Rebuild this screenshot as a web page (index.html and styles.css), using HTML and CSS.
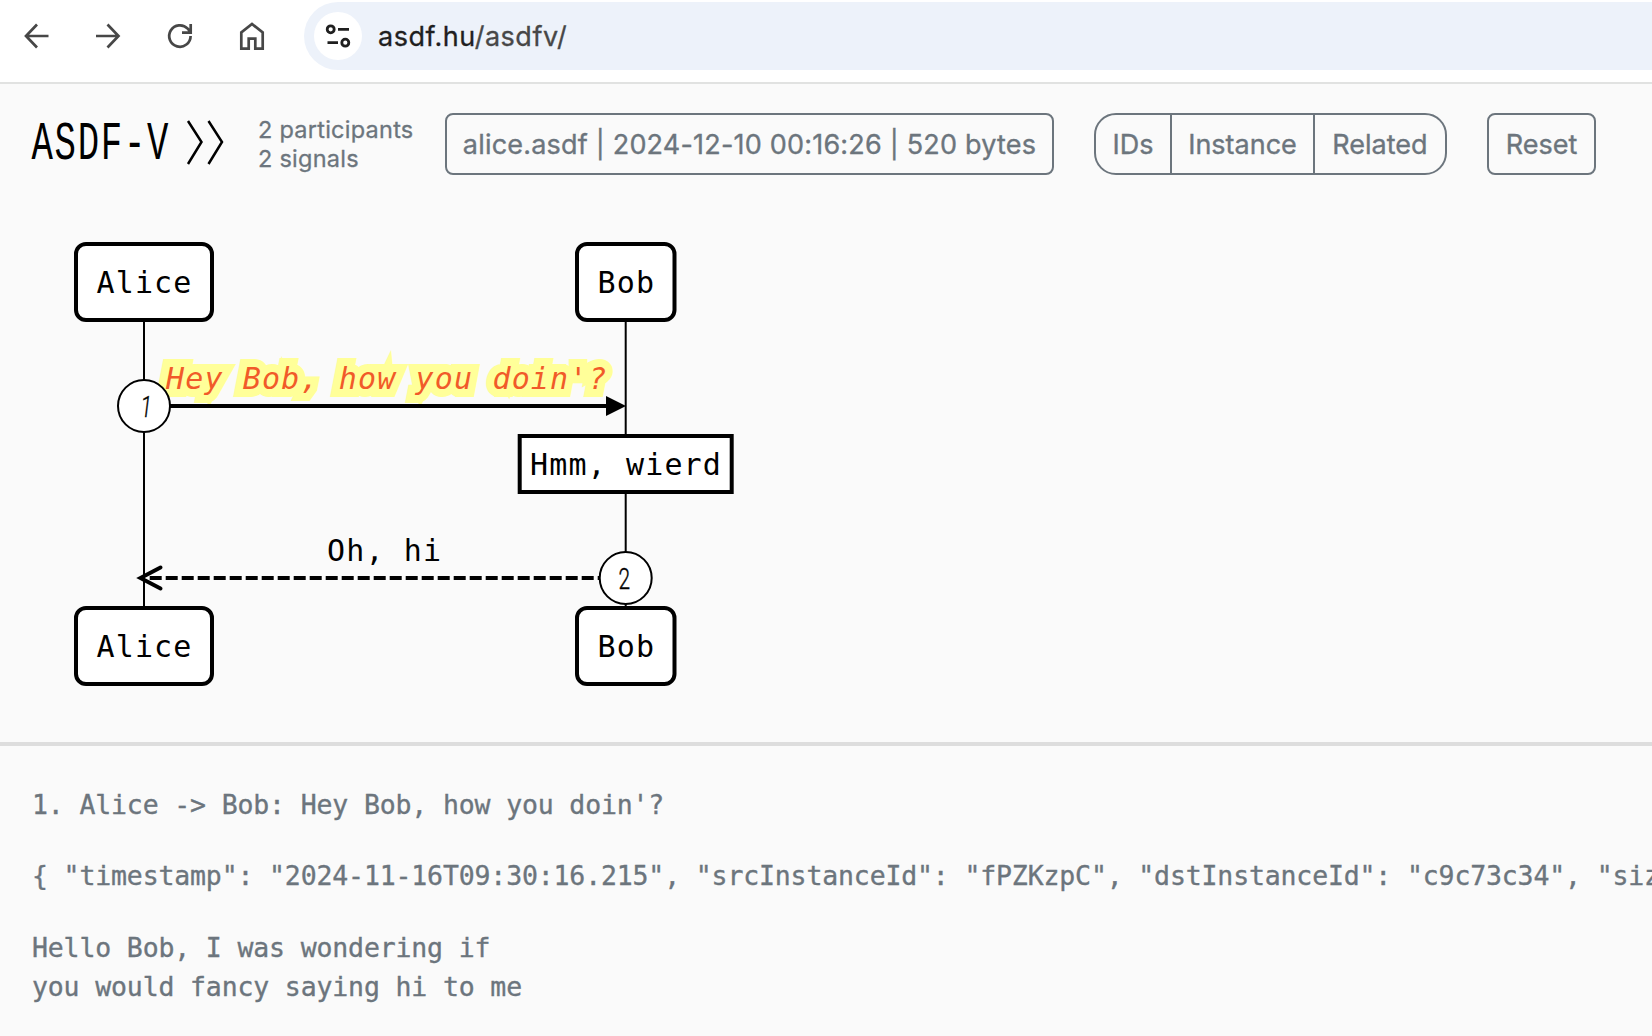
FILE: index.html
```html
<!DOCTYPE html>
<html lang="en">
<head>
<meta charset="utf-8">
<title>ASDF-V</title>
<link rel="stylesheet" href="styles.css">
</head>
<body>
<nav class="toolbar">
  <svg class="nav-icon" viewBox="0 0 32 32"><path d="M28.500 16H6.500M17 4.500 6 16l11 11.500"/></svg>
  <svg class="nav-icon" viewBox="0 0 32 32"><path d="M4 16h22M15.500 4.500 26.500 16l-11 11.500"/></svg>
  <svg class="nav-icon" viewBox="0 0 32 32"><path d="M26.600 16A10.700 10.700 0 1 1 23.700 8.700L26.400 12M26.700 4v8.700H18"/></svg>
  <svg class="nav-icon" viewBox="0 0 32 32"><path d="M5.300 28.600V12.500L16 4l10.700 8.500v16.100h-7.400V18.700h-6.600v9.900z"/></svg>
  <div class="omnibox">
    <span class="site-info">
      <svg width="28" height="28" viewBox="0 0 28 28"><circle cx="6.700" cy="7.300" r="3.500"/><circle cx="21.300" cy="20.700" r="3.500"/><path d="M14 7.300h11M3.500 20.700h10.500"/></svg>
    </span>
    <span class="url"><b>asdf.hu</b>/asdfv/</span>
  </div>
</nav>

<header class="header">
  <svg class="logo" width="206" height="52" viewBox="-10 0 206 52">
    <text transform="translate(1.500 41) scale(.66 1)">ASDF-V</text>
    <path d="M158 3l13.500 21-13.500 22M178.500 3l13.500 21-13.500 22"/>
  </svg>
  <div class="stats"><div>2 participants</div><div>2 signals</div></div>
  <button class="btn file"><span>alice.asdf | 2024-12-10 00:16:26 | 520 bytes</span></button>
  <div class="group">
    <button class="btn ids">IDs</button><button class="btn instance">Instance</button><button class="btn related">Related</button>
  </div>
  <button class="btn reset">Reset</button>
</header>

<main class="diagram">
<svg width="760" height="542" viewBox="0 200 760 542">
  <path class="life" d="M144 320V608M625.700 320V608"/>
  <g class="box">
    <rect x="76" y="244" width="136" height="76" rx="10"/>
    <rect x="577" y="244" width="97.500" height="76" rx="10"/>
    <rect x="76" y="608" width="136" height="76" rx="10"/>
    <rect x="577" y="608" width="97.500" height="76" rx="10"/>
    <rect x="519.700" y="436" width="212" height="56"/>
  </g>
  <g class="label">
    <text x="96.500" y="292.500">Alice</text>
    <text x="597.500" y="292.500">Bob</text>
    <text x="96.500" y="656.500">Alice</text>
    <text x="597.500" y="656.500">Bob</text>
    <text x="530" y="474.500">Hmm, wierd</text>
    <text x="327" y="561">Oh, hi</text>
    <text class="active" x="166" y="389">Hey Bob, how you doin'?</text>
  </g>
  <path class="signal" d="M144 406H608"/>
  <path d="M606 396l20 10-20 10z"/>
  <path class="signal dashed" d="M625.700 578H149"/>
  <path class="open-head" d="M160.500 567.500l-20 10.500 20 10.500"/>
  <g class="badge">
    <circle cx="144" cy="406" r="26"/>
    <circle cx="625.700" cy="578" r="26"/>
  </g>
  <g class="num">
    <text class="italic" transform="translate(140.500 416.500) scale(.72 1)">1</text>
    <text transform="translate(618.500 588.500) scale(.72 1)">2</text>
  </g>
</svg>
</main>

<section class="details">
  <p>1. Alice -&gt; Bob: Hey Bob, how you doin'?</p>
  <p>{ "timestamp": "2024-11-16T09:30:16.215", "srcInstanceId": "fPZKzpC", "dstInstanceId": "c9c73c34", "size": 50 }</p>
  <p>Hello Bob, I was wondering if<br>you would fancy saying hi to me</p>
</section>
</body>
</html>
```
FILE: styles.css
```css
* { box-sizing: border-box; }

body {
  margin: 0;
  height: 1036px;
  overflow: hidden;
  background: #fafafa;
  color: #6c757d;
  font-family: Inter, sans-serif;
}

.toolbar {
  display: flex;
  align-items: center;
  gap: 40px;
  height: 84px;
  padding: 0 0 10px 20px;
  background: #fff;
  border-bottom: 2px solid #e1e2e1;
}
.nav-icon {
  flex: none;
  width: 32px;
  height: 32px;
  fill: none;
  stroke: #474747;
  stroke-width: 2.7;
}
.omnibox {
  flex: 1;
  display: flex;
  align-items: center;
  gap: 16px;
  height: 68px;
  margin-left: -4px;
  padding-left: 10px;
  background: #edf2fa;
  border-radius: 34px 0 0 34px;
}
.site-info {
  display: grid;
  place-items: center;
  width: 48px;
  height: 48px;
  background: #fff;
  border-radius: 50%;
}
.site-info svg { fill: none; stroke: #1f1f1f; stroke-width: 2.8; }
.url { font-size: 27px; letter-spacing: .5px; color: #474747; -webkit-text-stroke: .3px; }
.url b { font-weight: 400; color: #1f1f1f; }

.header {
  display: flex;
  align-items: center;
  height: 116px;
  padding: 4px 0 0 20px;
}
.logo { flex: none; margin-right: 32px; overflow: visible; }
.logo text { font: 54px "Liberation Mono", monospace; letter-spacing: 2.6px; fill: #000; }
.logo path { fill: none; stroke: #000; stroke-width: 2.5; }
.stats {
  width: 187px;
  font-size: 23.5px;
  letter-spacing: .25px;
  line-height: 29px;
  white-space: nowrap;
  -webkit-text-stroke: .3px;
}
.btn {
  height: 62px;
  padding: 0;
  border: 2px solid #6c757d;
  border-radius: 8px;
  background: transparent;
  color: inherit;
  font: 27px Inter, sans-serif;
  white-space: nowrap;
  -webkit-text-stroke: .35px;
}
.file { width: 609px; margin-right: 40px; letter-spacing: .2px; }
.group { display: flex; margin-right: 40px; }
.ids { width: 78px; border-radius: 22px 0 0 22px; }
.instance { width: 145px; margin-left: -2px; border-radius: 0; }
.related { width: 134px; margin-left: -2px; border-radius: 0 22px 22px 0; }
.reset { width: 109px; }

.diagram { height: 546px; border-bottom: 4px solid #ddd; }
.diagram svg { display: block; }
.life { stroke: #000; stroke-width: 2; }
.box { fill: #fff; stroke: #000; stroke-width: 4; }
.label {
  font: 30px "DejaVu Sans Mono", monospace;
  letter-spacing: 1.14px;
  fill: #000;
}
.active {
  font-style: italic;
  fill: #f15a29;
  stroke: #ffff99;
  stroke-width: 16px;
  paint-order: stroke;
}
.signal { stroke: #000; stroke-width: 4; }
.dashed { stroke-dasharray: 12 4; }
.open-head { fill: none; stroke: #000; stroke-width: 4; stroke-linecap: round; }
.badge { fill: #fff; stroke: #000; stroke-width: 2; }
.num { font: 300 29px Roboto, sans-serif; fill: #000; stroke: #000; stroke-width: .4; }
.italic { font-style: italic; }

.details {
  padding: 39px 0 0 32px;
  font: 26.500px/39px "DejaVu Sans Mono", monospace;
  letter-spacing: -0.150px;
  white-space: nowrap;
  overflow: hidden;
  -webkit-text-stroke: .35px;
}
.details p { margin: 0 0 32.300px; }
```
